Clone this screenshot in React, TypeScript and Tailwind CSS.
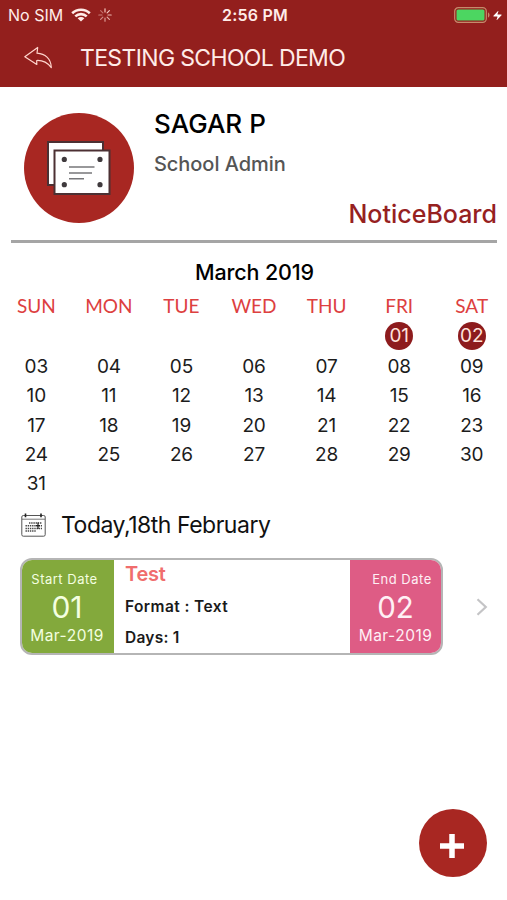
import { Zap } from "lucide-react"

const weekDays = ["SUN", "MON", "TUE", "WED", "THU", "FRI", "SAT"]

const days = Array.from({ length: 31 }, (_, i) => String(i + 1).padStart(2, "0"))

function WifiIcon() {
  return (
    <svg width="20" height="14" viewBox="0 0 20 14" fill="none" stroke="#ffece8" strokeWidth="2.6">
      <path d="M1.2 5.2C6 0.6 14 0.6 18.8 5.2" />
      <path d="M4.3 8.4C7.5 5.4 12.5 5.4 15.7 8.4" />
      <path d="M10 13.6L6.6 10.2C8.5 8.5 11.5 8.5 13.4 10.2Z" fill="#ffece8" stroke="none" />
    </svg>
  )
}

function SpinnerIcon() {
  return (
    <svg width="14" height="14" viewBox="0 0 14 14" stroke="#ffd9d2" strokeWidth="1.2" strokeLinecap="round">
      {[0, 45, 90, 135, 180, 225, 270, 315].map((angle, i) => (
        <path key={angle} d="M7 0.8V4" transform={`rotate(${angle} 7 7)`} opacity={i === 0 ? 0.9 : 0.35 + ((8 - i) % 8) * 0.08} />
      ))}
    </svg>
  )
}

function BatteryIcon() {
  return (
    <svg width="37" height="16" viewBox="0 0 37 16" fill="none">
      <rect x="0.7" y="0.7" width="31.6" height="14.6" rx="3.6" stroke="#c58b6c" strokeWidth="1.2" />
      <rect x="2.5" y="2.5" width="28" height="11" rx="1.6" fill="#4cd661" />
      <path d="M34 5.5C36 6 36 10 34 10.5Z" fill="#c58b6c" />
    </svg>
  )
}

function BackIcon() {
  return (
    <svg width="30" height="24" viewBox="0 0 30 24" fill="none" stroke="#ffd5cd" strokeWidth="1.2" strokeLinejoin="round">
      <path d="M1.8 10.7L14.7 1.5L14 7.2C22 7.7 28 12.5 28.3 21.6C24.5 16.7 19.5 14.2 13.7 14.5L13.8 18.5Z" />
    </svg>
  )
}

function NoticeIcon() {
  return (
    <svg width="66" height="56" viewBox="0 0 66 56" fill="#fff" stroke="#4c3033" strokeWidth="2">
      <rect x="2" y="2" width="55" height="43" />
      <rect x="8.5" y="10.5" width="55" height="43.5" />
      <g fill="#3f3a3d" stroke="none">
        <circle cx="18.3" cy="19.4" r="2.6" />
        <circle cx="54" cy="19.4" r="2.6" />
        <circle cx="18.3" cy="44.7" r="2.6" />
        <circle cx="54" cy="44.7" r="2.6" />
      </g>
      <path d="M23 27H48.5M23 33H46M23 38.7H38" stroke="#77777a" strokeWidth="1.5" />
    </svg>
  )
}

function CalendarIcon() {
  return (
    <svg width="25" height="24" viewBox="0 0 25 24" fill="none" stroke="#555">
      <rect x="0.8" y="2.5" width="23.4" height="20.7" rx="1.5" />
      <path d="M1 6.2H24" strokeWidth="0.8" />
      <path d="M4.5 0.5V4.2M20 0.5V4.2" stroke="#222" strokeWidth="1.6" />
      <path d="M8 10H21M4.5 12.7H21M4.5 15.4H21M4.5 18.1H15" stroke="#444" strokeWidth="1.5" strokeDasharray="1.4 0.8" />
      <path d="M17 9.5V16M15 12.7H19" stroke="#222" strokeWidth="1.2" />
    </svg>
  )
}

export default function App() {
  return (
    <div className="relative h-[900px] w-[507px] overflow-hidden bg-white font-[Inter,sans-serif] text-black">
      <header className="h-[87px] bg-[#931f1d] text-[#ffece8]">
        <div className="flex h-[30px] items-center pr-[4px] pl-[8px]">
          <span className="w-[63px] text-[16px] leading-[30px] whitespace-nowrap">No SIM</span>
          <WifiIcon />
          <span className="ml-[7px]"><SpinnerIcon /></span>
          <span className="ml-[110px] text-[16px] font-semibold tracking-[0.2px] whitespace-nowrap">2:56 PM</span>
          <span className="ml-auto flex items-center gap-[1px]">
            <BatteryIcon />
            <Zap size={11} fill="#fff" strokeWidth={0} />
          </span>
        </div>
        <div className="flex h-[56px] items-center pl-[23px]">
          <BackIcon />
          <h1 className="ml-[27px] text-[23px] tracking-[-0.65px] whitespace-nowrap">TESTING SCHOOL DEMO</h1>
        </div>
      </header>

      <section className="mr-[10px] ml-[11px] flex h-[156px] border-b-[3px] border-[#a5a5a5] pl-[13px]">
        <div className="mt-[26px] flex size-[110px] shrink-0 items-center justify-center rounded-full bg-[#a82722]">
          <NoticeIcon />
        </div>
        <div className="ml-[20px] flex flex-1 flex-col pt-[21px]">
          <span className="text-[26px] leading-[32px] font-medium">SAGAR P</span>
          <span className="mt-[12px] text-[20px] leading-[24px] font-medium tracking-[-0.05px] text-[#555]">School Admin</span>
          <span className="mt-[23px] self-end text-[25px] leading-[30px] font-medium text-[#96211f]">NoticeBoard</span>
        </div>
      </section>

      <section className="pt-[15px]">
        <h2 className="pl-[2px] text-center text-[21.5px] leading-[28px] font-medium tracking-[-0.15px]">March 2019</h2>
        <div className="grid w-[508px] grid-cols-7 text-center font-[Lato,sans-serif] text-[19px] leading-[28px] text-[#dd4040]">
          {weekDays.map((name) => (
            <span key={name} className="pt-[6px]">{name}</span>
          ))}
        </div>
        <div className="mt-[2px] grid w-[508px] auto-rows-[29.4px] grid-cols-7 text-[19px] tracking-[-0.2px] text-[#1c1c1c]">
          {days.map((day, i) => (
            <div key={day} className={i === 0 ? "col-start-6 flex items-center justify-center" : "flex items-center justify-center"}>
              {i < 2 ? (
                <span className="mb-[2px] flex size-[28px] items-center justify-center rounded-full bg-[#8d1b1d] pt-[2px] text-[#ffe3dc]">{day}</span>
              ) : (
                <span className="pt-[2px]">{day}</span>
              )}
            </div>
          ))}
        </div>
      </section>

      <div className="mt-[12px] flex h-[30px] items-center pl-[21px]">
        <CalendarIcon />
        <span className="ml-[15px] text-[23px] tracking-[-0.48px] whitespace-nowrap text-[#111]">Today,18th February</span>
      </div>

      <div className="mt-[18px] flex items-center pl-[20px]">
        <div className="flex h-[97px] w-[423px] overflow-hidden rounded-[12px] border-2 border-[#b5b5b5]">
          <div className="flex w-[92px] flex-col items-center bg-[#83a93c] text-[#f4ffe0]">
            <span className="mt-[11px] -ml-[7px] text-[13px] leading-[16px] tracking-[0.5px]">Start Date</span>
            <span className="mt-[3px] -ml-[2px] text-[30px] leading-[34px]">01</span>
            <span className="mt-[2px] -ml-[2px] text-[15.5px] leading-[20px] tracking-[0.5px]">Mar-2019</span>
          </div>
          <div className="flex flex-1 flex-col pl-[11px]">
            <span className="mt-[1px] text-[20px] leading-[26px] font-semibold tracking-[-0.2px] text-[#f06d6d]">Test</span>
            <span className="mt-[10px] text-[15.5px] leading-[20px] font-semibold tracking-[0.4px] text-[#1a1a1a]">Format : Text</span>
            <span className="mt-[11px] text-[15.5px] leading-[20px] font-semibold tracking-[0.25px] text-[#1a1a1a]">Days: 1</span>
          </div>
          <div className="flex w-[91px] flex-col items-center bg-[#de5c85] text-[#fff0f5]">
            <span className="mt-[11px] ml-[13px] text-[13px] leading-[16px] tracking-[0.5px]">End Date</span>
            <span className="mt-[3px] text-[29.5px] leading-[34px]">02</span>
            <span className="mt-[2px] text-[15.5px] leading-[20px] tracking-[0.5px]">Mar-2019</span>
          </div>
        </div>
        <svg className="ml-[33px]" width="12" height="18" viewBox="0 0 12 18" fill="none" stroke="#c4c4c6" strokeWidth="2.2">
          <path d="M1.5 1.2L9.8 9L1.5 16.8" />
        </svg>
      </div>

      <button className="absolute top-[809px] left-[419px] flex size-[68px] items-center justify-center rounded-full bg-[#a82722]">
        <svg className="mt-[5px] mr-[2px]" width="24" height="24" viewBox="0 0 24 24" fill="none" stroke="#fff" strokeWidth="5.5">
          <path d="M12 0V24M0 12H24" />
        </svg>
      </button>
    </div>
  )
}
